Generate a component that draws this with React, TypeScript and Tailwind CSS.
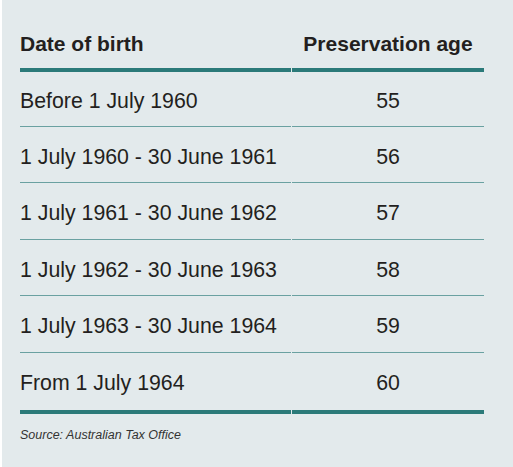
const rows = [
  { date: "Before 1 July 1960", age: "55" },
  { date: "1 July 1960 - 30 June 1961", age: "56" },
  { date: "1 July 1961 - 30 June 1962", age: "57" },
  { date: "1 July 1962 - 30 June 1963", age: "58" },
  { date: "1 July 1963 - 30 June 1964", age: "59" },
  { date: "From 1 July 1964", age: "60" },
];

export default function App() {
  return (
    <div className="w-[513px] h-[467px] bg-white pl-[2px]">
      <div
        className="h-full bg-[#e3eaec] pl-[18px] pt-[32px] text-[#231f20]"
        style={{ fontFamily: '"Liberation Sans", Arial, sans-serif' }}
      >
        <div className="w-[464px]">
          <div className="grid grid-cols-[271px_1fr] gap-x-px">
            <div className="pb-[12px] border-b-4 border-[#2b7a79] text-[21px] leading-[24px] font-bold">
              Date of birth
            </div>
            <div className="pb-[12px] border-b-4 border-[#2b7a79] text-[21px] leading-[24px] font-bold text-center">
              Preservation age
            </div>
            {rows.map((r, i) => {
              const last = i === rows.length - 1;
              const first = i === 0;
              const cell = last
                ? "pt-[18px] pb-[15px] border-b-4 border-[#2b7a79]"
                : first
                  ? "pt-[17px] pb-[13px] border-b border-[#6aa1a1]"
                  : "pt-[18px] pb-[13.4px] border-b border-[#6aa1a1]";
              return [
                <div key={r.date} className={`${cell} text-[21.3px] leading-[24px]`}>
                  {r.date}
                </div>,
                <div key={r.age} className={`${cell} text-[21.3px] leading-[24px] text-center`}>
                  {r.age}
                </div>,
              ];
            })}
          </div>
          <p className="mt-[13px] text-[12.5px] leading-[16px] italic text-[#333]">
            Source: Australian Tax Office
          </p>
        </div>
      </div>
    </div>
  );
}
